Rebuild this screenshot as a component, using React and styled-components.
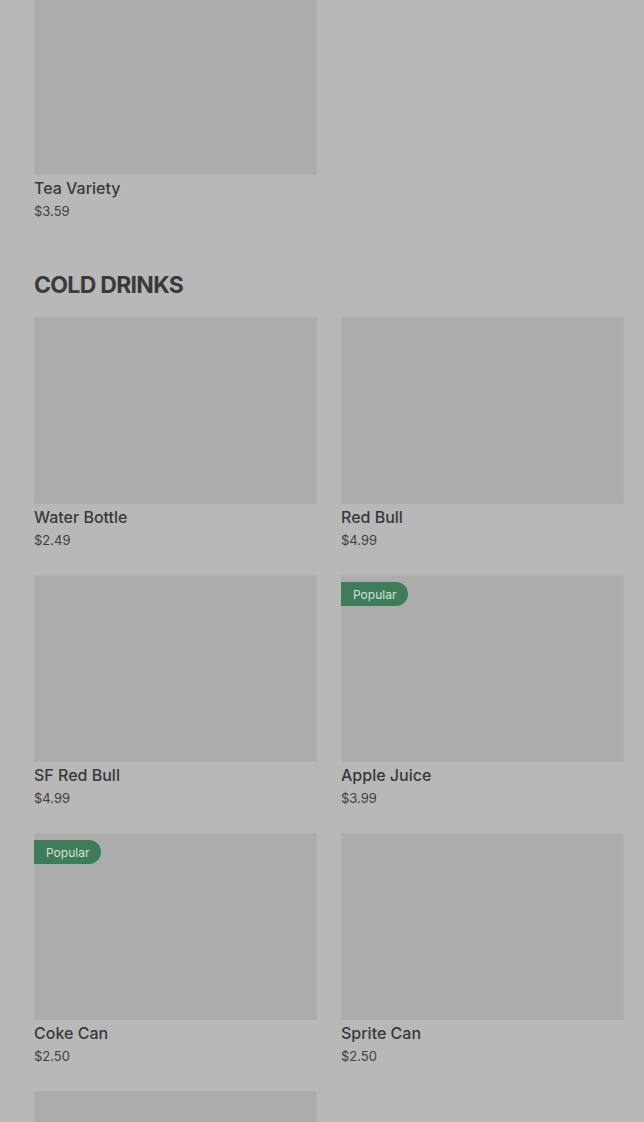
import React from "react";
import styled, { createGlobalStyle } from "styled-components";

const GlobalStyle = createGlobalStyle`
  html, body {
    margin: 0;
    padding: 0;
    background: #b8b8b8;
    font-family: Inter, "Liberation Sans", sans-serif;
    color: #383838;
  }
`;

const teaItems = [{ name: "Tea Variety", price: "$3.59" }];

const coldItems = [
  { name: "Water Bottle", price: "$2.49" },
  { name: "Red Bull", price: "$4.99" },
  { name: "SF Red Bull", price: "$4.99" },
  { name: "Apple Juice", price: "$3.99", popular: true },
  { name: "Coke Can", price: "$2.50", popular: true },
  { name: "Sprite Can", price: "$2.50" },
  { name: "", price: "" },
];

const Item = ({ name, price, popular }) => (
  <Card>
    <Thumb>{popular && <Badge>Popular</Badge>}</Thumb>
    {name && <Name>{name}</Name>}
    {price && <Price>{price}</Price>}
  </Card>
);

const App = () => {
  return (
    <>
      <GlobalStyle />
      <Page>
        <Section>
          <Grid>
            {teaItems.map((it) => (
              <Item key={it.name} {...it} />
            ))}
          </Grid>
        </Section>

        <Section>
          <Heading>COLD DRINKS</Heading>
          <Grid>
            {coldItems.map((it, i) => (
              <Item key={i} {...it} />
            ))}
          </Grid>
        </Section>
      </Page>
    </>
  );
};

export default App;

const Page = styled.div`
  margin-top: -12px;
  padding: 0 20px 0 34px;
  display: flex;
  flex-direction: column;
  gap: 48px;
  height: 1134px;
  overflow: hidden;
`;

const Section = styled.section`
  display: flex;
  flex-direction: column;
`;

const Heading = styled.h2`
  margin: 0 0 17px;
  font-size: 23px;
  line-height: 30px;
  font-weight: 700;
  letter-spacing: -0.7px;
  color: #3a3a3a;
`;

const Grid = styled.div`
  display: grid;
  grid-template-columns: 283px 283px;
  column-gap: 24px;
  row-gap: 24px;
`;

const Card = styled.div`
  display: flex;
  flex-direction: column;
`;

const Thumb = styled.div`
  position: relative;
  height: 187px;
  background: #acacac;
  box-shadow: inset 0 0 0 1px #afafaf;
`;

const Badge = styled.span`
  position: absolute;
  top: 7px;
  left: 0;
  height: 24px;
  padding: 0 12px;
  display: flex;
  align-items: center;
  background: #3e7c5a;
  color: #d6e2da;
  font-size: 12px;
  border-radius: 0 12px 12px 0;
`;

const Name = styled.div`
  margin-top: 3px;
  font-size: 16px;
  line-height: 20px;
  font-weight: 500;
  color: #383838;
`;

const Price = styled.div`
  margin-top: 3px;
  font-size: 13px;
  line-height: 21px;
  font-weight: 400;
  color: #404040;
`;
